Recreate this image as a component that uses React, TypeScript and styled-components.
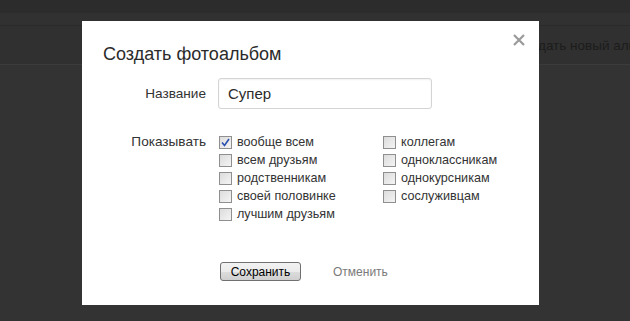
import { createGlobalStyle, styled } from 'styled-components';

const GlobalStyle = createGlobalStyle`
    html, body {
        margin: 0;
        padding: 0;
        background: #333333;
        font-family: "Liberation Sans", Arial, sans-serif;
    }
`;

const leftOptions = ['вообще всем', 'всем друзьям', 'родственникам', 'своей половинке', 'лучшим друзьям'];
const rightOptions = ['коллегам', 'одноклассникам', 'однокурсникам', 'сослуживцам'];

function CheckIcon() {
    return (
        <svg width="9" height="9" viewBox="0 0 9 9">
            <path d="M1 4.5 L3.5 7.5 L8 1" fill="none" stroke="#2a4fb0" strokeWidth="1.6" />
        </svg>
    );
}

function Option({ label, checked }: { label: string; checked?: boolean }) {
    return (
        <OptionRow>
            <Box>{checked && <CheckIcon />}</Box>
            <span>{label}</span>
        </OptionRow>
    );
}

export default function App() {
    return (
        <Page>
            <GlobalStyle />
            <TopBar />
            <SubBar />
            <ToolBar>
                <ToolLink>Создать новый альбом</ToolLink>
            </ToolBar>
            <Rest />

            <Modal>
                <Close>
                    <svg width="12" height="12" viewBox="0 0 12 12">
                        <path d="M1 1 L11 11 M11 1 L1 11" stroke="#9a9a9a" strokeWidth="2.2" />
                    </svg>
                </Close>
                <Title>Создать фотоальбом</Title>
                <FieldRow>
                    <Label>Название</Label>
                    <Input>Супер</Input>
                </FieldRow>
                <FieldRow $top>
                    <Label>Показывать</Label>
                    <Columns>
                        <Column>
                            {leftOptions.map((o, i) => (
                                <Option key={o} label={o} checked={i === 0} />
                            ))}
                        </Column>
                        <Column>
                            {rightOptions.map((o) => (
                                <Option key={o} label={o} />
                            ))}
                        </Column>
                    </Columns>
                </FieldRow>
                <Actions>
                    <SaveButton>Сохранить</SaveButton>
                    <CancelLink>Отменить</CancelLink>
                </Actions>
            </Modal>
        </Page>
    );
}

const Page = styled.div`
    position: relative;
    width: 630px;
    height: 321px;
    overflow: hidden;
    background: #333333;
`;

const TopBar = styled.div`
    height: 13px;
    background: #2c2c2c;
`;

const SubBar = styled.div`
    height: 12px;
    background: #313131;
    border-bottom: 1px solid #2a2a2a;
`;

const ToolBar = styled.div`
    height: 38px;
    display: flex;
    align-items: center;
    padding-left: 515px;
    background: #303030;
    border-bottom: 1px solid #3b3b3b;
`;

const ToolLink = styled.span`
    font-size: 13.5px;
    color: #1c1c1c;
    white-space: nowrap;
`;

const Rest = styled.div`
    height: 256px;
    background: #333333;
`;

const Modal = styled.div`
    position: absolute;
    left: 82px;
    top: 21px;
    width: 457px;
    height: 284px;
    box-sizing: border-box;
    padding: 22px 0 0 21px;
    background: #ffffff;
    color: #333333;
`;

const Close = styled.div`
    position: absolute;
    top: 13px;
    right: 14px;
    display: flex;
`;

const Title = styled.div`
    font-size: 18px;
    line-height: 22px;
    color: #2b2b2b;
    margin-bottom: 13px;
`;

const FieldRow = styled.div<{ $top?: boolean }>`
    display: flex;
    align-items: ${(p) => (p.$top ? 'flex-start' : 'center')};
    gap: 12px;
    margin-top: ${(p) => (p.$top ? '24px' : '0')};
`;

const Label = styled.div`
    flex-shrink: 0;
    width: 103px;
    text-align: right;
    font-size: 13.6px;
    line-height: 18px;
    color: #333333;
`;

const Input = styled.div`
    width: 214px;
    height: 31px;
    box-sizing: border-box;
    display: flex;
    align-items: center;
    padding-left: 9px;
    border: 1px solid #d4d4d4;
    border-radius: 3px;
    box-shadow: inset 0 1px 2px rgba(0, 0, 0, 0.06);
    font-size: 15px;
    color: #2b2b2b;
`;

const Columns = styled.div`
    display: flex;
    margin-left: 1px;
`;

const Column = styled.div`
    display: flex;
    flex-direction: column;
    width: 164px;
`;

const OptionRow = styled.label`
    display: flex;
    align-items: center;
    gap: 5px;
    height: 18px;
    font-size: 12.6px;
    color: #333333;
    white-space: nowrap;
`;

const Box = styled.span`
    flex-shrink: 0;
    width: 13px;
    height: 13px;
    box-sizing: border-box;
    display: flex;
    align-items: center;
    justify-content: center;
    border: 1px solid #8f8f8f;
    background: linear-gradient(135deg, #dcdcdc 0%, #f4f4f4 100%);
`;

const Actions = styled.div`
    display: flex;
    align-items: center;
    gap: 32px;
    margin-top: 39px;
    padding-left: 117px;
`;

const SaveButton = styled.button`
    width: 81px;
    height: 19px;
    padding: 0;
    border: 1px solid #707070;
    border-radius: 3px;
    background: linear-gradient(#f2f2f2 0%, #ebebeb 50%, #dddddd 51%, #cfcfcf 100%);
    font-family: "Liberation Sans", Arial, sans-serif;
    font-size: 12px;
    color: #000000;
`;

const CancelLink = styled.span`
    font-size: 12px;
    color: #7a7a7a;
`;
